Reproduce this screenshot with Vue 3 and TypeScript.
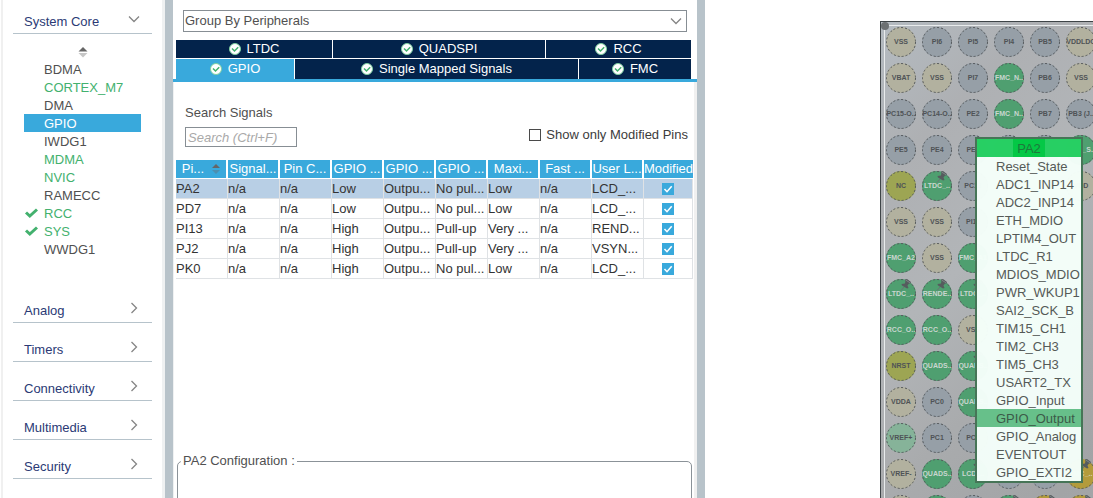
<script setup lang="ts">
import { ref } from 'vue'

type CoreState = 'plain' | 'used' | 'active'
interface CoreItem { name: string; state: CoreState; check?: boolean }

const coreItems: CoreItem[] = [
  { name: 'BDMA', state: 'plain' },
  { name: 'CORTEX_M7', state: 'used' },
  { name: 'DMA', state: 'plain' },
  { name: 'GPIO', state: 'active' },
  { name: 'IWDG1', state: 'plain' },
  { name: 'MDMA', state: 'used' },
  { name: 'NVIC', state: 'used' },
  { name: 'RAMECC', state: 'plain' },
  { name: 'RCC', state: 'used', check: true },
  { name: 'SYS', state: 'used', check: true },
  { name: 'WWDG1', state: 'plain' },
]
const categories: string[] = ['Analog', 'Timers', 'Connectivity', 'Multimedia', 'Security']

const tabRows = [
  [
    { name: 'LTDC', size: 't156' },
    { name: 'QUADSPI', size: 't212' },
    { name: 'RCC', size: 't145' },
  ],
  [
    { name: 'GPIO', size: 't118' },
    { name: 'Single Mapped Signals', size: 't283' },
    { name: 'FMC', size: 't112' },
  ],
]
const activeTab = ref('GPIO')

const headers: string[] = ['Pi...', 'Signal...', 'Pin C...', 'GPIO ...', 'GPIO ...', 'GPIO ...', 'Maxi...', 'Fast ...', 'User L...', 'Modified']
const rows: string[][] = [
  ['PA2', 'n/a', 'n/a', 'Low', 'Outpu...', 'No pul...', 'Low', 'n/a', 'LCD_...'],
  ['PD7', 'n/a', 'n/a', 'Low', 'Outpu...', 'No pul...', 'Low', 'n/a', 'LCD_...'],
  ['PI13', 'n/a', 'n/a', 'High', 'Outpu...', 'Pull-up', 'Very ...', 'n/a', 'REND...'],
  ['PJ2', 'n/a', 'n/a', 'High', 'Outpu...', 'Pull-up', 'Very ...', 'n/a', 'VSYN...'],
  ['PK0', 'n/a', 'n/a', 'High', 'Outpu...', 'No pul...', 'Low', 'n/a', 'LCD_...'],
]

// Ball notation: kind letter, optional "*" for a pinned signal, then the label.
// c = power, g = free, s = assigned signal, o = special, v = reference, y = partial, "-" = no ball
const ballRows: string[][] = [
  ['cVSS', 'gPI6', 'gPI5', 'gPI4', 'gPB5', 'cVDDLDO'],
  ['cVBAT', 'cVSS', 'gPI7', 'sFMC_N..', 'gPB6', 'cVSS'],
  ['gPC15-O..', 'gPC14-O..', 'gPE2', 'sFMC_N..', 'gPB7', 'gPB3 (J..'],
  ['gPE5', 'gPE4', 'gPE3', 'gPB9', 'gPB8', 'sFMC_S..'],
  ['oNC', 's*LTDC_..', 'gPC13', '-', '-', 'cVDD'],
  ['cVSS', 'cVSS', 'gPI11', '-', '-', '-'],
  ['sFMC_A2', 'cVSS', 'sFMC_A1', '-', '-', '-'],
  ['s*LTDC_..', 's*RENDE..', 's*LTDC_..', '-', '-', '-'],
  ['sRCC_O..', 'sRCC_O..', 'cVSS', '-', '-', '-'],
  ['oNRST', 'sQUADS..', 's*QUADS..', '-', '-', '-'],
  ['cVDDA', 'gPC0', 'sQUADS..', '-', '-', '-'],
  ['vVREF+', 'gPC1', 'gPC2', '-', '-', '-'],
  ['cVREF-', 'sQUADS..', 's*LCD_..', 'g', 'g', 'y*FMC_..'],
  ['c', 's', 'g', 's*', 'y*', 'y*'],
]
const balls = ballRows.flat().map((b, id) => ({
  id,
  kind: b[0],
  pinned: b[1] === '*',
  label: b.slice(b[1] === '*' ? 2 : 1),
}))

const pinMenu: string[] = [
  'Reset_State', 'ADC1_INP14', 'ADC2_INP14', 'ETH_MDIO', 'LPTIM4_OUT', 'LTDC_R1',
  'MDIOS_MDIO', 'PWR_WKUP1', 'SAI2_SCK_B', 'TIM15_CH1', 'TIM2_CH3', 'TIM5_CH3',
  'USART2_TX', 'GPIO_Input', 'GPIO_Output', 'GPIO_Analog', 'EVENTOUT', 'GPIO_EXTI2',
]
const pinFunction = ref('GPIO_Output')
</script>

<template>
  <div class="app">
    <nav class="sidebar">
      <button class="category open" type="button">
        <span>System Core</span>
        <svg class="chev" width="12" height="12" viewBox="0 0 12 12"><path d="M1 3.5 L6 8.5 L11 3.5" /></svg>
      </button>
      <div class="core">
        <button class="sort" type="button" aria-label="Sort">
          <svg width="10" height="12" viewBox="0 0 10 12">
            <path d="M5 1 L9.500 5.500 H.5 Z" fill="#666" /><path d="M.5 7 H9.500 L5 11.500 Z" fill="#c6c6c6" />
          </svg>
        </button>
        <button v-for="c in coreItems" :key="c.name" type="button" class="core-item" :class="c.state">
          <span class="mark">
            <svg v-if="c.check" width="14" height="12" viewBox="0 0 14 12"><path d="M2 5.500 L5.800 9 L13 2.500" fill="none" stroke="#43b16e" stroke-width="3" /></svg>
          </span>
          <span class="core-name">{{ c.name }}</span>
        </button>
      </div>
      <button v-for="c in categories" :key="c" class="category" type="button">
        <span>{{ c }}</span>
        <svg class="chev" width="12" height="12" viewBox="0 0 12 12"><path d="M3.500 1 L8.500 6 L3.500 11" /></svg>
      </button>
    </nav>

    <main class="panel">
      <div class="group-select">
        <select aria-label="Grouping">
          <option>Group By Peripherals</option>
        </select>
        <svg class="chev" width="12" height="12" viewBox="0 0 12 12"><path d="M1 3.500 L6 8.500 L11 3.500" /></svg>
      </div>

      <div class="tabs">
        <div v-for="(r, i) in tabRows" :key="i" class="tab-row">
          <button
            v-for="t in r" :key="t.name" type="button" class="tab"
            :class="[t.size, { active: activeTab === t.name }]" @click="activeTab = t.name"
          >
            <svg width="12" height="12" viewBox="0 0 12 12">
              <circle cx="6" cy="6" r="5.500" fill="#fff" stroke="#7fd0a0" />
              <path d="M3 5.500 L5.500 8 L9.200 4.200" fill="none" stroke="#43b16e" stroke-width="1.500" />
            </svg>
            <span>{{ t.name }}</span>
          </button>
        </div>
      </div>

      <section class="content">
        <div class="filters">
          <div class="search">
            <label for="search">Search Signals</label>
            <input id="search" type="text" placeholder="Search (Ctrl+F)">
          </div>
          <label class="only"><input type="checkbox">Show only Modified Pins</label>
        </div>

        <table class="pins">
          <colgroup>
            <col v-for="n in 9" :key="n" class="col">
            <col>
          </colgroup>
          <thead>
            <tr>
              <th v-for="(h, i) in headers" :key="i" scope="col">
                <span class="th">
                  {{ h }}
                  <svg v-if="i === 0" width="8" height="10" viewBox="0 0 8 10">
                    <path d="M4 0 L8 4 H0 Z" fill="#666" /><path d="M0 6 H8 L4 10 Z" fill="#4c8fb0" />
                  </svg>
                </span>
              </th>
            </tr>
          </thead>
          <tbody>
            <tr v-for="(r, i) in rows" :key="r[0]" :class="{ selected: i === 0 }">
              <td v-for="(v, j) in r" :key="j">{{ v }}</td>
              <td class="mod">
                <span class="tick">
                  <input type="checkbox" checked :aria-label="r[0] + ' Modified'">
                  <svg width="12" height="12" viewBox="0 0 12 12"><path d="M2.500 6 L5 8.700 L9.700 3.300" /></svg>
                </span>
              </td>
            </tr>
          </tbody>
        </table>

        <fieldset class="config">
          <legend>PA2 Configuration&nbsp;:</legend>
        </fieldset>
      </section>
    </main>

    <section class="canvas">
      <div class="chip">
        <svg class="corner" width="8" height="8" viewBox="0 0 8 8"><circle cx="4" cy="4" r="4" fill="#6d7173" /></svg>
        <div class="balls">
          <div v-for="b in balls" :key="b.id" class="cell">
            <div v-if="b.kind !== '-'" class="ball" :class="'k-' + b.kind">
              <svg class="ring" width="30" height="30" viewBox="0 0 30 30">
                <circle cx="15" cy="15" r="14.500" fill="none" stroke="#55595c" stroke-dasharray="2 2" />
              </svg>
              <svg v-if="b.pinned" class="pushpin" width="12" height="12" viewBox="0 0 12 12">
                <path d="M4 8 L1 11.500" stroke="#6c7274" />
                <path d="M1.500 5 L5 4.500 L5.500 1.500 L5 0.500 L7 0 L11 3 L10.500 4.500 L9 4.500 L7.500 6.500 L8.500 9 L7 9.500 L2 6.500 Z" fill="#565c5e" />
                <path d="M5.500 1 L10.500 4" stroke="#7d8486" />
              </svg>
              <span class="label">{{ b.label }}</span>
            </div>
          </div>
        </div>

        <div class="menu">
          <div class="menu-title"><span>PA2</span></div>
          <button
            v-for="m in pinMenu" :key="m" type="button" class="menu-item"
            :class="{ chosen: pinFunction === m }" @click="pinFunction = m"
          >{{ m }}</button>
        </div>
      </div>
    </section>
  </div>
</template>

<style>
body {
  margin: 0;
  background: #fff;
  overflow: hidden;
}
</style>

<style scoped>
.app {
  display: flex;
  height: 100vh;
  overflow: hidden;
  font: 13px/18px "Liberation Sans", Arial, sans-serif;
  color: #3c3c3c;
}
.app * {
  box-sizing: border-box;
}
button {
  margin: 0;
  padding: 0;
  border: 0;
  background: none;
  font: inherit;
  color: inherit;
  text-align: left;
}
.chev path {
  fill: none;
  stroke: #858585;
  stroke-width: 1.3;
}

.sidebar {
  flex: 0 0 164px;
  margin-left: 1px;
  padding: 0 10px;
  border-left: 2px solid #f0f0f0;
  border-right: 3px solid #eff1f2;
}
.category {
  display: flex;
  justify-content: space-between;
  align-items: center;
  width: 100%;
  height: 39px;
  padding: 17px 12px 2px 11px;
  border-bottom: 1px solid #b6c3cb;
  color: #2b3a75;
}
.category .chev {
  margin-bottom: 6px;
}
.category.open {
  height: 34px;
  padding-top: 13px;
}
.core {
  padding: 10px 11px 26px;
}
.sort {
  display: block;
  height: 16px;
  margin: 0 auto;
}
.sort svg {
  display: block;
}
.core-item {
  display: flex;
  width: 100%;
  height: 18px;
  color: #505050;
}
.core-item.used {
  color: #43b16e;
}
.core-item.active {
  background: #39a9dc;
  color: #fff;
}
.mark {
  flex: 0 0 20px;
  padding-top: 3px;
}
.mark svg {
  display: block;
}
.core-name {
  line-height: 20px;
}

.panel {
  flex: 0 0 540px;
  display: flex;
  flex-direction: column;
  border: solid #b8c3ca;
  border-width: 0 8px;
  padding-top: 10px;
}
.group-select {
  position: relative;
  margin: 0 10px;
}
.group-select select {
  display: block;
  appearance: none;
  width: 100%;
  height: 22px;
  padding: 0 1px;
  border: 1px solid #878e94;
  border-radius: 0;
  background: #fff;
  font: inherit;
  color: #505050;
}
.group-select .chev {
  position: absolute;
  right: 5px;
  top: 5px;
}
.tabs {
  display: grid;
  gap: 1px;
  margin-top: 8px;
  padding: 0 6px 0 3px;
  border-bottom: 3px solid #39a9dc;
}
.tab-row {
  display: flex;
  gap: 1px;
  height: 18px;
}
.tab-row + .tab-row {
  height: 20px;
}
.tab {
  display: flex;
  justify-content: center;
  align-items: center;
  gap: 6px;
  background: #03234b;
  color: #fff;
}
.tab.active {
  background: #39a9dc;
}
.t156 { flex: 156 1 0; }
.t212 { flex: 212 1 0; }
.t145 { flex: 145 1 0; }
.t118 { flex: 118 1 0; }
.t283 { flex: 283 1 0; }
.t112 { flex: 112 1 0; }

.content {
  flex: 1;
  display: flex;
  flex-direction: column;
  border-left: 1px solid #eff1f2;
  border-right: 3px solid #f0f0f0;
  padding: 22px 1px 0 2px;
}
.filters {
  display: flex;
  justify-content: space-between;
  align-items: flex-end;
  padding: 0 5px 0 9px;
}
.search {
  display: grid;
  gap: 5px;
}
.search input {
  width: 112px;
  height: 20px;
  padding: 0 2px;
  border: 1px solid #878e94;
  border-radius: 0;
  font: italic 13px/18px "Liberation Sans", Arial, sans-serif;
  color: #505050;
}
.search label {
  color: #505050;
}
.search input::placeholder {
  color: #a9a9a9;
  opacity: 1;
}
.only {
  display: flex;
  align-items: center;
  gap: 5px;
  height: 24px;
}
.only input {
  appearance: none;
  width: 12px;
  height: 12px;
  margin: 0;
  border: 1px solid #4a4a4a;
  background: #fff;
}
.only input:checked {
  background: #39a9dc;
}

.pins {
  width: 100%;
  margin-top: 13px;
  table-layout: fixed;
  border-collapse: separate;
  border-spacing: 0;
}
.pins .col {
  width: 52px;
}
.pins th {
  height: 19px;
  padding: 0;
  border-right: 2px solid #fff;
  border-bottom: 1px solid #fff;
  background: #39a9dc;
  background-clip: padding-box;
  font-weight: normal;
  color: #fff;
  white-space: nowrap;
}
.pins th:last-child {
  border-right: 0;
}
.th {
  display: flex;
  justify-content: center;
  align-items: center;
  gap: 8px;
  height: 18px;
}
.pins td {
  height: 20px;
  padding: 0;
  border-right: 1px solid #dfe2e5;
  border-bottom: 1px solid #dfe2e5;
  white-space: nowrap;
  overflow: hidden;
  color: #333;
}
.pins .selected td {
  background: #b8cfe5;
}
.tick {
  display: grid;
  justify-content: center;
}
.tick input,
.tick svg {
  grid-area: 1 / 1;
  display: block;
  width: 12px;
  height: 12px;
  margin: 0;
}
.tick input {
  appearance: none;
  border: 1px solid #39a9dc;
  background: #fff;
}
.tick input:checked {
  background: #39a9dc;
}
.tick svg {
  fill: none;
  stroke: #fff;
  stroke-width: 1.5;
  pointer-events: none;
}
.config {
  flex: 1;
  min-width: 0;
  margin: 173px 1px -8px;
  padding: 0;
  border: 1px solid #8b9298;
  border-radius: 5px;
}
.config legend {
  margin-left: 3px;
  padding: 0 2px;
  color: #505050;
}

.canvas {
  flex: 1;
  min-width: 0;
  padding: 21px 0 0 175px;
  overflow: hidden;
}
.chip {
  position: relative;
  width: 540px;
  padding: 2px;
  border: 1px solid #3e4447;
  background: linear-gradient(135deg, #b4bbc1 0, #aeb0b3 110px, #b2b5b8 230px, #a9abad 340px, #a2a4a6 460px, #a9abad 600px);
}
.chip::before {
  content: "";
  position: absolute;
  inset: 3px;
  border: 1px solid #e8ebec;
}
.corner {
  position: absolute;
  left: 0;
  top: 0;
}
.balls {
  position: relative;
  display: grid;
  grid-template-columns: repeat(6, 36px);
}
.cell {
  display: grid;
  place-items: center;
  height: 36px;
}
.ball {
  position: relative;
  display: grid;
  place-items: center;
  width: 30px;
  height: 30px;
  border-radius: 50%;
  font: bold 7px/10px "Liberation Sans", Arial, sans-serif;
  color: #4f5356;
  white-space: nowrap;
}
.ring {
  position: absolute;
  left: 0;
  top: 0;
}
.pushpin {
  position: absolute;
  right: 4px;
  top: 0;
}
.label {
  position: relative;
}
.k-c { background: #b2b19f; }
.k-g { background: #969fa7; }
.k-s { background: #4f9f70; color: #c9d6cf; }
.k-o { background: #9da553; }
.k-v { background: #86b399; }
.k-y { background: #b39b3c; color: #d5d0b5; }

.menu {
  position: absolute;
  left: 94px;
  top: 115px;
  width: 108px;
  border: 2px solid #467557;
  background: rgba(244, 254, 249, 0.98);
}
.menu-title {
  display: flex;
  justify-content: center;
  height: 18px;
  background: rgba(10, 200, 78, 0.88);
  line-height: 20px;
  color: #1d7a3b;
}
.menu-title span {
  padding: 0 4px;
  background: #04c846;
}
.menu-item {
  display: block;
  width: 100%;
  height: 18px;
  padding: 2px 0 0 19px;
  line-height: 16px;
  color: #555a57;
  white-space: nowrap;
}
.menu-item.chosen {
  background: #67c08a;
  color: #3c5a48;
}
</style>
